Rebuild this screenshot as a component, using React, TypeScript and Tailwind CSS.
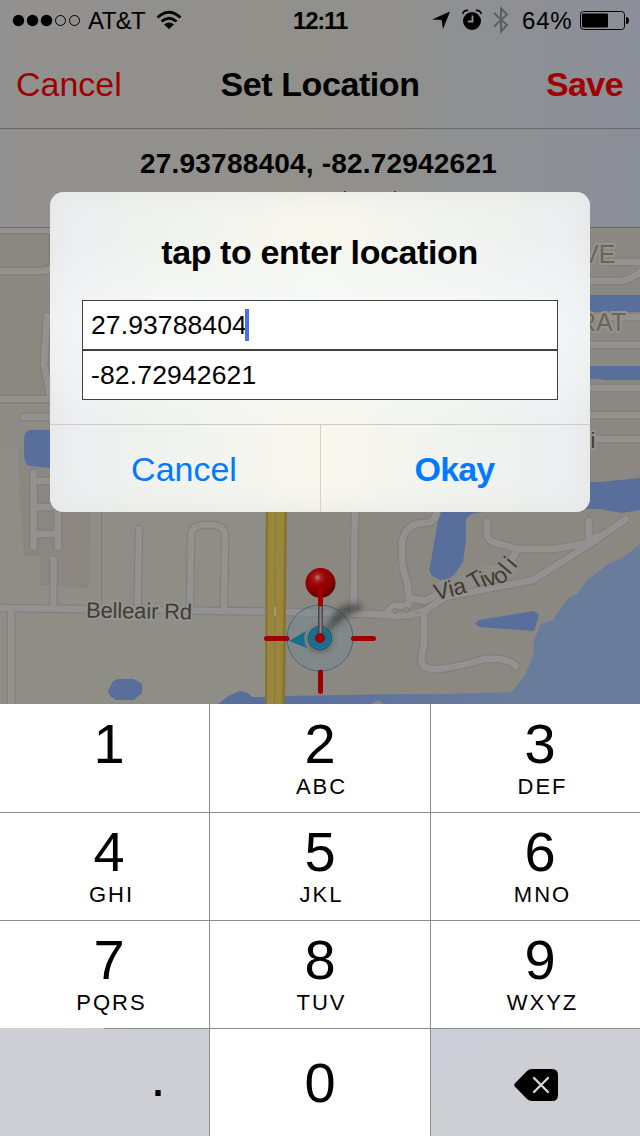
import React from "react";

const minorRoads = [
  "M0 230H60",
  "M0 271H40Q50 271 54 266",
  "M47 316L44 365L51 400",
  "M0 399H60",
  "M23 417H60",
  "M33.500 473V547M33.500 481H58M33.500 507H58M33.500 534H58M58 505V547",
  "M53.500 560V606",
  "M11 612V710",
  "M139 529L137.500 608",
  "M190 608L191 536Q191 526 203 525H213Q225 526 225 536L224 608",
  "M355 505L353.500 612",
  "M437 505Q438 522 426 523L416 524Q402 530 402 545V560Q403 570 407 582L409 597",
  "M487 522V535Q488 541 496 543L518 549H553Q575 546 590 542L597 536",
  "M589 521V541",
  "M518 549L509 563",
  "M424 612L424 645Q420 660 422 664Q426 670 440 669Q462 666 485 659Q508 657 516 666",
  "M580 281H620Q632 280 645 268",
  "M605 262H640",
  "M580 317H640M580 345H640M580 388H640M580 415H640M580 439H640",
];
const mainRoads = [
  "M0 608L150 610L265 611.500L385 614.500",
  "M385 614.500L398 616L410 615L425 611L445 597L533 580L590 544L626 519",
  "M387 613Q391 606 396 606H408L410 598L425 601L436 595",
];

const Roads = ({ color, grow }: { color: string; grow: number }) => (
  <g fill="none" stroke={color} strokeLinecap="round" strokeLinejoin="round">
    {minorRoads.map((d) => <path key={d} d={d} strokeWidth={5.5 + grow} />)}
    {mainRoads.map((d) => <path key={d} d={d} strokeWidth={5.5 + grow} />)}
  </g>
);

const label = { fontFamily: "'Liberation Sans', sans-serif", paintOrder: "stroke" as const };

function MapView() {
  return (
    <svg className="block h-[476px] w-full shrink-0" viewBox="0 228 640 476">
      <defs>
        <linearGradient id="sea" x1="0" y1="0" x2="1" y2="0.3">
          <stop offset="0.35" stopColor="#5b719c" />
          <stop offset="0.85" stopColor="#6a7c9b" />
        </linearGradient>
        <radialGradient id="ball" cx="0.4" cy="0.32" r="0.65">
          <stop offset="0" stopColor="#c08080" />
          <stop offset="0.18" stopColor="#a52020" />
          <stop offset="0.45" stopColor="#960000" />
          <stop offset="0.8" stopColor="#860000" />
          <stop offset="1" stopColor="#5c0000" />
        </radialGradient>
        <linearGradient id="needle" x1="0" y1="0" x2="1" y2="0">
          <stop offset="0" stopColor="#333" />
          <stop offset="0.5" stopColor="#858585" />
          <stop offset="1" stopColor="#3c3c3c" />
        </linearGradient>
        <filter id="soft" x="-50%" y="-50%" width="200%" height="200%">
          <feGaussianBlur stdDeviation="3" />
        </filter>
      </defs>

      <rect y="228" width="640" height="476" fill="#8b8781" />
      <path d="M0 449H17L22 512H101V512H265V704H0Z" fill="#8e8d86" />
      <path d="M0 404H60V449H0Z" fill="#8f8b85" />
      <path d="M19 490L24 556H40V585L89 588L91 490Z" fill="#8b8780" />
      <path d="M101.500 505V604" stroke="#7e7c75" fill="none" />
      <path d="M0 234H49V261Q48 267 42 268H0" stroke="#7b786f" fill="none" />

      <g fill="#586f9b">
        <path d="M60 430H30Q24 431 24 440V456Q25 466 31 466L60 469Z" />
        <path d="M580 295H640V312H580ZM580 366H640V380H603L600 379H580Z" />
        <path d="M580 482H600L640 478V510L622 513L600 509H580Z" />
        <path d="M441 505L434 543L431 562L429 570L432 576L441 580Q452 579 456 572L463 562L466 540L466 520Q469 513 476 513L482 512V505Z" />
        <path d="M475 624L479 620L534 611L539 615L534 631L480 627Z" />
        <path d="M108 691L113 681L118 679H134L142 684V693L134 700H116L110 696Z" />
        <path d="M217 705L228 696L240 691L248 693L252 697H268V705Z" />
      </g>
      <path d="M640 544L625 556L608 564L587 580L578 593L567 599L553 620L541 624L534 640L533 657L525 675L512 692L480 693L440 694L400 694L284 696V705H640Z" fill="url(#sea)" />
      <path d="M371 704L379 700L383 704Z" fill="#8b8781" />

      <Roads color="#807e76" grow={3} />
      <Roads color="#939291" grow={1} />
      <circle cx="395" cy="611" r="2.500" fill="#8b8781" stroke="#7f7d75" />
      <circle cx="406.500" cy="610" r="2.500" fill="#8b8781" stroke="#7f7d75" />
      <path d="M415 604L424 606L430 602M415 612L420 613" stroke="#7f7d75" fill="none" />

      <path d="M266 500H287L285 704H265Z" fill="#8a712a" />
      <path d="M268 500H284.500L282.500 704H267Z" fill="#99863e" />
      <path d="M275.500 500L274.500 704" stroke="#8b7835" />
      <path d="M275 607V616" stroke="#a09a75" strokeWidth="2" />

      <path d="M441 590L462 584L480 576L500 573L510 566" fill="none" stroke="#93918d" strokeOpacity="0.5" strokeWidth="17" strokeLinecap="round" strokeLinejoin="round" />
      <g style={label} stroke="#949390" strokeWidth="4" strokeLinejoin="round">
        <text x="86" y="617.500" fontSize="22" fill="#403c33" textLength="106" transform="rotate(1 86 617)">Belleair Rd</text>
        <text
          fontSize="23"
          fill="#403c33"
          stroke="none"
          x="436 450.500 455 466 473 483.500 487.500 499 509.500 515"
          y="600.500 597 595.500 592 590 587.500 587 585.500 575.500 569"
          rotate="-14 -14 -14 -14 -30 -22 -20 -34 -50 -50"
        >
          Via Tivoli
        </text>
        <text x="582" y="262.500" fontSize="25" fill="#6d6553">VE</text>
        <text x="578" y="331" fontSize="25" fill="#6d6553">RAT</text>
        <text x="590.500" y="448" fontSize="22" fill="#403c33">i</text>
      </g>

      <circle cx="320" cy="638" r="33" fill="#6f8e96" fillOpacity="0.36" stroke="#45678a" />
      <path d="M321 637L335 612Q346 602 362 604Q363 611 349 615Z" fill="#222" opacity="0.55" filter="url(#soft)" />
      <circle cx="320" cy="640" r="12" fill="#222" opacity="0.45" filter="url(#soft)" />
      <path d="M289 641L306 631Q302 639 307 648Z" fill="#176f8f" />
      <circle cx="320" cy="638" r="11.500" fill="#176f8f" stroke="#0e536f" />
      <circle cx="320" cy="638" r="10.500" fill="none" stroke="#2c768f" />
      <circle cx="320.500" cy="583" r="15" fill="url(#ball)" />
      <rect x="318" y="604" width="5" height="32" fill="url(#needle)" />
      <circle cx="320" cy="638" r="5" fill="#9c0000" />
      <path d="M266.500 638.500H287M353.500 638.500H373.500M320.500 585V604M320.500 672V691.500" stroke="#9c0000" strokeWidth="5" strokeLinecap="round" />
    </svg>
  );
}

function StatusBar() {
  return (
    <div className="flex h-[40px] items-center text-[24px] leading-none">
      <svg className="ml-[12px] h-[14px] w-[70px] shrink-0" viewBox="0 0 70 14">
        {[6.5, 20.500, 34.500].map((x) => <circle key={x} cx={x} cy="7.500" r="5.700" />)}
        {[48.500, 62.500].map((x) => <circle key={x} cx={x} cy="7.500" r="5" fill="none" stroke="#000" />)}
      </svg>
      <span className="ml-[6px] w-[58px] shrink-0 whitespace-nowrap pt-[1px] tracking-[-0.6px]">AT&amp;T</span>
      <svg className="ml-[10px] h-[20px] w-[26px] shrink-0" viewBox="0 0 26 20" fill="none" stroke="#000" strokeWidth="2.800">
        <path d="M1.500 7.500Q13 -3 24.500 7.500" />
        <path d="M5.500 11.500Q13 5 20.500 11.500" />
        <path d="M8 14.500Q13 10.500 18 14.500L13 19Z" fill="#000" stroke="none" />
      </svg>
      <span className="ml-[111px] w-[56px] shrink-0 pt-[1px] font-bold tracking-[-1.2px]">12:11</span>
      <svg className="ml-[83px] h-[19px] w-[19px] shrink-0" viewBox="0 0 19 19"><path d="M18 0.500L11 18L9.500 9L0 8.500Z" /></svg>
      <svg className="ml-[11px] h-[22px] w-[20px] shrink-0" viewBox="0 0 20 22">
        <circle cx="10" cy="12" r="9" />
        <path d="M0.500 5Q2 1 6 1.500M19.500 5Q18 1 14 1.500" stroke="#000" strokeWidth="1.800" fill="none" />
        <path d="M10.500 6.500V12.500H6" stroke="#929190" strokeWidth="1.800" fill="none" />
      </svg>
      <svg className="ml-[11px] h-[28px] w-[16px] shrink-0" viewBox="0 0 16 28" fill="none" stroke="#5e5e5d" strokeWidth="2">
        <path d="M1 7L14 19L8 25.500V2.500L14 8.500L1 20.500" />
      </svg>
      <span className="ml-[13px] w-[51px] shrink-0 pt-[1px] tracking-[0.8px]">64%</span>
      <svg className="ml-[7px] h-[20px] w-[50px] shrink-0" viewBox="0 0 50 20">
        <rect x="0.500" y="1.500" width="44" height="18" rx="3" fill="none" stroke="#000" />
        <rect x="2" y="3.500" width="26" height="14" rx="1" />
        <path d="M46 7Q49 7 49 10.500Q49 14 46 14Z" />
      </svg>
    </div>
  );
}

function Key({ digit, letters, shift, first }: { digit: string; letters?: string; shift?: boolean; first?: boolean }) {
  return (
    <button className={`flex flex-col items-center bg-white ${first ? "pt-[12px]" : "pt-[11px]"} ${shift ? "pl-[9px]" : ""}`}>
      <span className="text-[56px] leading-[56px]">{digit}</span>
      <span className={`mt-[4px] text-[22px] leading-[22px] tracking-[2px] ${shift ? "pl-[5px]" : "pl-[3px]"}`}>{letters}</span>
    </button>
  );
}

function Keypad() {
  return (
    <div className="grid h-[432px] shrink-0 grid-cols-[209px_220px_209px] grid-rows-[108px_107px_107px_107px] gap-px bg-[#8c8c8c]">
      <Key digit="1" shift first />
      <Key digit="2" letters="ABC" first />
      <Key digit="3" letters="DEF" shift first />
      <Key digit="4" letters="GHI" shift />
      <Key digit="5" letters="JKL" />
      <Key digit="6" letters="MNO" shift />
      <Key digit="7" letters="PQRS" shift />
      <Key digit="8" letters="TUV" />
      <Key digit="9" letters="WXYZ" shift />
      <div className="-mt-px flex flex-col bg-[#ceced3]">
        <div className="ml-[104px] h-px shrink-0 bg-[#8c8c8c]" />
        <button className="flex-1 bg-linear-to-bl from-[#cbd0d4] to-[#cecfd5] to-40% pb-[12px] pl-[107px] text-[56px] leading-[56px]">.</button>
      </div>
      <button className="flex flex-col items-center bg-white pt-[26px] text-[56px] leading-[56px]">0</button>
      <button className="flex items-center justify-center bg-linear-to-br from-[#cbcfdb] to-[#cecfd4] to-40% pt-[5px]" aria-label="Delete">
        <svg className="h-[32px] w-[44px]" viewBox="0 0 44 32">
          <path d="M0.800 14.500L13 2Q15 0 18 0H38Q44 0 44 6V26Q44 32 38 32H18Q15 32 13 30L0.800 17.500Q-0.300 16 0.800 14.500Z" />
          <path d="M20 9L34 23M34 9L20 23" stroke="#d4d5d9" strokeWidth="2.400" strokeLinecap="round" />
        </svg>
      </button>
    </div>
  );
}

function Dialog() {
  return (
    <div className="absolute left-[50px] top-[192px] flex h-[320px] w-[540px] flex-col overflow-hidden rounded-[14px] bg-linear-to-r from-[#ebeef0] via-[#f8f8ee] via-50% to-[#ebeef0] shadow-[inset_0_0_30px_#e6e6e4]">
      <div className="flex h-[232px] flex-col bg-[radial-gradient(ellipse_at_30%_60%,#f8fafa_0%,transparent_50%),radial-gradient(ellipse_at_75%_60%,#f5f9fa_0%,transparent_50%)] px-[32px]">
        <h2 className="mt-[40px] pr-px text-center text-[34px] font-bold leading-[40px] tracking-[-0.4px]">tap to enter location</h2>
        <div className="mt-[28px] flex h-[50px] items-center border border-[#414141] bg-white pl-[8px] text-[26.5px]">
          <span className="pt-[1px] tracking-[0.1px]">27.93788404</span>
          <span className="-ml-[2px] h-[32px] w-[4px] bg-[#4a70f0]" />
        </div>
        <div className="flex h-[50px] items-center border border-[#414141] bg-white pl-[8px] text-[26.5px]">
          <span className="pt-[1px] tracking-[0.15px]">-82.72942621</span>
        </div>
      </div>
      <div className="grid h-[88px] grid-cols-[271px_269px] border-t border-[#c9cccb] text-[34px] text-[#007aff]">
        <button className="border-r border-[#d3d2c5] pr-[2px] pt-px">Cancel</button>
        <button className="pr-[2px] pt-px font-bold tracking-[-0.8px]">Okay</button>
      </div>
    </div>
  );
}

export default function App() {
  return (
    <main className="relative flex h-[1136px] w-[640px] flex-col overflow-hidden font-['Liberation_Sans',Arial,sans-serif] text-black">
      <header className="flex h-[228px] shrink-0 flex-col bg-linear-to-r from-[#929191] via-[#92908a] via-48% to-[#8b8f99]">
        <StatusBar />
        <div className="grid h-[89px] grid-cols-[1fr_auto_1fr] items-center border-b border-[#696969] px-[16px] text-[34px] leading-[40px]">
          <span className="text-[#a00000]">Cancel</span>
          <h1 className="font-bold tracking-[-0.4px]">Set Location</h1>
          <span className="pr-px text-right font-bold tracking-[-0.6px] text-[#a00000]">Save</span>
        </div>
        <div className="flex flex-1 flex-col border-b border-[#696969]">
          <p className="mt-[18px] pr-[3px] text-center text-[28px] font-bold leading-[34px] tracking-[0.2px]">27.93788404, -82.72942621</p>
          <div className="ml-[344px] mt-[10px] flex gap-[48px]">
            <i className="h-px w-[2px] bg-[#3a3a3a]" />
            <i className="h-px w-[2px] bg-[#3a3a3a]" />
          </div>
        </div>
      </header>
      <MapView />
      <Keypad />
      <Dialog />
    </main>
  );
}
